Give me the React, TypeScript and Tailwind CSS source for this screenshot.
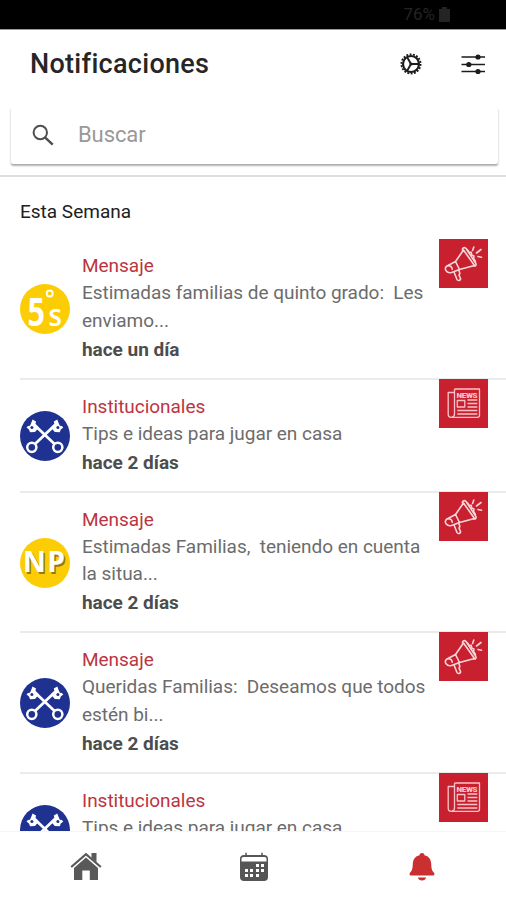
import clsx from "clsx";

type Notice = {
  kind: "message" | "news";
  avatar: "quinto" | "keys" | "np";
  title: string;
  lines: string[];
  time: string;
};

const notices: Notice[] = [
  { kind: "message", avatar: "quinto", title: "Mensaje", lines: ["Estimadas familias de quinto grado:\u00a0 Les", "enviamo..."], time: "hace un día" },
  { kind: "news", avatar: "keys", title: "Institucionales", lines: ["Tips e ideas para jugar en casa"], time: "hace 2 días" },
  { kind: "message", avatar: "np", title: "Mensaje", lines: ["Estimadas Familias,\u00a0 teniendo en cuenta", "la situa..."], time: "hace 2 días" },
  { kind: "message", avatar: "keys", title: "Mensaje", lines: ["Queridas Familias:\u00a0 Deseamos que todos", "estén bi..."], time: "hace 2 días" },
  { kind: "news", avatar: "keys", title: "Institucionales", lines: ["Tips e ideas para jugar en casa"], time: "hace 2 días" },
];

function CogIcon() {
  return (
    <svg className="h-[22px] w-[22px]" viewBox="0 0 22 22" fill="none" stroke="#1c1c1c">
      <circle cx="11" cy="11" r="9.6" strokeWidth="1.8" strokeDasharray="1.9 1.45" />
      <circle cx="11" cy="11" r="8" strokeWidth="2.2" />
      <circle cx="11" cy="11" r="1.6" fill="#1c1c1c" stroke="none" />
      <path d="M11 11h8M11 11L7 4.1M11 11l-4 6.9" strokeWidth="1.9" />
    </svg>
  );
}

function SlidersIcon() {
  return (
    <svg className="h-[22px] w-[25px]" viewBox="0 0 25 22" fill="#1c1c1c" stroke="#1c1c1c">
      <path d="M.5 4H24M.5 11.5H24M.5 18.5H24" strokeWidth="1.7" />
      <circle cx="17" cy="4" r="2.6" stroke="none" />
      <circle cx="7.8" cy="11.5" r="2.6" stroke="none" />
      <circle cx="17" cy="18.5" r="2.6" stroke="none" />
    </svg>
  );
}

function SearchIcon() {
  return (
    <svg className="h-[22px] w-[22px]" viewBox="0 0 22 22" fill="none" stroke="#4f4f4f">
      <circle cx="8.3" cy="8.5" r="6.7" strokeWidth="2" />
      <path d="M13 13.3l7.700 7.400" strokeWidth="2.5" />
    </svg>
  );
}

function MegaphoneIcon() {
  return (
    <svg className="size-[49px]" viewBox="0 0 49 49" fill="none" stroke="#f7d5d8" strokeWidth="1.6" strokeLinecap="round" strokeLinejoin="round">
      <path d="M8 27L16.500 22.500 20.500 30.500 12.500 33.500c-4.500 1.200-8.500-3.800-4.500-6.500z" />
      <path d="M8.500 26.700c2.500-.5 4.700 1.200 4.700 3.500" />
      <path d="M16.500 22.500l8-11.500L35.500 26.500 20.500 30.500" />
      <path d="M23.500 11c-.5-2 2.200-3.500 3.800-1.200l9.400 14.400c1 1.800-.2 3.500-2.200 2.500" />
      <path d="M28.500 11l1.500 2.500 2.300-.2.300 2.700 2.300 1-.3 2.500 1.800 3" />
      <path d="M15 33l3 7.500c.8 1.700 4 1 3.500-1l-1.500-3.400.9-1.700-1.200-3.400" />
      <path d="M33.600 11.500l1.200-3.500M37.500 14l4.500-3.500M39 17.500l3.500.8" />
    </svg>
  );
}

function NewsIcon() {
  return (
    <svg className="size-[49px]" viewBox="0 0 49 49" fill="none" stroke="#f7c3c8" strokeWidth="1.3" strokeLinejoin="round">
      <path d="M15.500 10h25v26.300q0 2-2 2h-26.500q-2.800 0-2.800-2.800V13.500h6.300" />
      <path d="M15.500 10v25q0 3-2.700 3" />
      <path d="M18.300 21.500h7.500v6.500h-7.500zM28.500 21h9.800M28.500 24.500h9.800M28.500 28h9.800M18.300 31.500h20M18.300 35h20" />
      <text x="17.500" y="18.500" textLength="21" fontSize="8" fontWeight="900" fontFamily="Roboto, sans-serif" fill="#f7c3c8" stroke="none">NEWS</text>
    </svg>
  );
}

function KeysAvatar() {
  return (
    <svg className="size-[50px]" viewBox="0 0 50 50" fill="none" stroke="#fff">
      <circle cx="25" cy="25" r="25" fill="#1f3292" stroke="none" />
      <path d="M15 33L35 14M34.500 33L14.500 14" strokeWidth="2.700" />
      <circle cx="11.800" cy="36.300" r="4.600" strokeWidth="2.500" />
      <circle cx="37.800" cy="36.300" r="4.600" strokeWidth="2.500" />
      <path d="M12.500 8.500l3.500 2-.5 2.500 3.500 3.500-4 4.500-5 .2-1-2.700-2.500-2 1.500-1.500 2-.3 1.300-3zM37.300 8.500l-3.500 2 .5 2.500-3.500 3.500 4 4.500 5 .2 1-2.700 2.500-2-1.500-1.500-2-.3-1.300-3z" fill="#fff" stroke="none" />
      <circle cx="11.900" cy="16.600" r="1.500" fill="#1f3292" stroke="none" />
      <circle cx="37.900" cy="16.600" r="1.500" fill="#1f3292" stroke="none" />
    </svg>
  );
}

function Avatar({ name }: { name: Notice["avatar"] }) {
  if (name === "keys") return <KeysAvatar />;
  return (
    <svg className="size-[50px]" viewBox="0 0 50 50" fill="#fff" fontFamily="Open Sans, sans-serif">
      <circle cx="25" cy="25" r="25" fill="#fccc05" />
      {name === "np" ? (
        <g fontSize="28" fontWeight="700" fontFamily="Noto Sans, sans-serif">
          <text x="4.500" y="35.500" textLength="42" fill="#94791c">NP</text>
          <text x="3" y="34" textLength="42">NP</text>
        </g>
      ) : (
        <>
          <text x="7.500" y="41.500" fontSize="40" fontWeight="700" textLength="17.500" lengthAdjust="spacingAndGlyphs">5</text>
          <text x="28.500" y="41.500" fontSize="30" fontWeight="600" textLength="13.500" lengthAdjust="spacingAndGlyphs">s</text>
          <circle cx="29.700" cy="9.500" r="3" fill="none" stroke="#fff" strokeWidth="1.900" />
        </>
      )}
    </svg>
  );
}

function HomeIcon() {
  return (
    <svg className="h-[29px] w-[32px]" viewBox="0 0 32 29" fill="#595959">
      <path d="M1.200 15L16 2.200 30.800 15" fill="none" stroke="#595959" strokeWidth="2.200" />
      <path d="M21.500 1h5v9l-5-4zM4 16L16 5.500 28 16v12h-8.200v-9.500h-7.500V28H4z" />
    </svg>
  );
}

function CalendarIcon() {
  return (
    <svg className="h-[30px] w-[30px]" viewBox="0 0 30 30" fill="#555">
      <rect x="1" y="3" width="28" height="26" rx="4" />
      <path d="M7 .8v4M23 .8v4" stroke="#555" strokeWidth="1.500" />
      <path d="M2.500 9.500V7Q2.500 5 4.500 5h21Q27.500 5 27.500 7v2.500z" fill="#fff" />
      <path
        d="M17 12h3v3h-3zM22 12h3v3h-3zM6 17h3v3H6zM11 17h3v3h-3zM17 17h3v3h-3zM22 17h3v3h-3zM6 22h3v3H6zM11 22h3v3h-3zM17 22h3v3h-3z"
        fill="#fff"
      />
    </svg>
  );
}

function BellIcon() {
  return (
    <svg className="h-[30px] w-[26px]" viewBox="0 0 26 30" fill="#c9302f">
      <path d="M13 1c1.500 0 2.300.9 2.500 2.200 4.200.9 6.500 4 6.700 8.500.2 5.300.8 7 2.800 9 .7.700.7 2.800-.8 2.800H1.800c-1.500 0-1.500-2.100-.8-2.800 2-2 2.600-3.700 2.800-9 .2-4.500 2.500-7.600 6.700-8.500C10.700 1.900 11.500 1 13 1z" />
      <path d="M8.800 25.500h8.400c-.5 1.800-2.200 3-4.200 3s-3.700-1.200-4.200-3z" />
    </svg>
  );
}

function NoticeRow({ notice, first }: { notice: Notice; first: boolean }) {
  return (
    <li
      className={clsx(
        "ml-5 flex shrink-0 border-t-2 pr-[18px]",
        first ? "border-transparent" : "border-[#ebebeb]",
        notice.lines.length > 1 ? "h-[140.5px]" : "h-[113px]",
      )}
    >
      <div className="flex w-[62px] items-center pt-[2px]">
        <Avatar name={notice.avatar} />
      </div>
      <div className="flex-1 whitespace-nowrap pt-[13px] text-[19px] leading-[27.3px] tracking-[-0.03px] text-[#6c6c6c]">
        <h2 className="text-[#bd3440]">{notice.title}</h2>
        {notice.lines.map((line) => (
          <p key={line}>{line}</p>
        ))}
        <p className="pt-[2px] font-bold text-[#4d4d4d]">{notice.time}</p>
      </div>
      <div className={clsx("size-[49px] bg-[#c8202f]", !first && "-mt-px")}>
        {notice.kind === "news" ? <NewsIcon /> : <MegaphoneIcon />}
      </div>
    </li>
  );
}

export default function App() {
  return (
    <div className="flex h-[900px] w-[506px] flex-col overflow-hidden bg-white font-[Roboto,sans-serif]">
      <div className="flex h-[30px] shrink-0 items-center justify-end gap-1 border-b border-[#999] bg-black pr-[56px] text-[#242424]">
        <span className="text-[17px] leading-none">76%</span>
        <svg className="h-[15px] w-[11px]" viewBox="0 0 11 15" fill="currentColor">
          <path d="M3 0h5v2h3v13H0V2h3z" />
        </svg>
      </div>

      <header className="flex h-[147px] shrink-0 flex-col border-b-2 border-[#dedede]">
        <div className="flex h-[77px] shrink-0 items-center pb-[9px] pl-[30px] pr-5">
          <h1 className="flex-1 text-[27px] font-medium tracking-[0.3px] text-[#262626]">Notificaciones</h1>
          <CogIcon />
          <div className="ml-[39px]">
            <SlidersIcon />
          </div>
        </div>
        <div className="ml-[11px] mr-[8px] flex h-[57px] items-center rounded-[2px] pl-[21px] pb-[2px] shadow-[0_2px_2px_rgba(0,0,0,0.28),0_1px_2px_rgba(0,0,0,0.1)]">
          <SearchIcon />
          <span className="ml-[24px] text-[22px] tracking-[-0.1px] text-[#999]">Buscar</span>
        </div>
      </header>

      <main className="flex min-h-0 flex-1 flex-col overflow-hidden">
        <h3 className="h-[60px] shrink-0 pl-5 pt-[21px] text-[19px] leading-[27px] text-[#202020]">Esta Semana</h3>
        <ul className="flex flex-col">
          {notices.map((notice, i) => (
            <NoticeRow key={i} notice={notice} first={i === 0} />
          ))}
        </ul>
      </main>

      <nav className="grid h-[69px] shrink-0 grid-cols-3 place-items-center border-t border-[#f5f5f5] bg-white pl-[2px] pt-px">
        <HomeIcon />
        <CalendarIcon />
        <BellIcon />
      </nav>
    </div>
  );
}
